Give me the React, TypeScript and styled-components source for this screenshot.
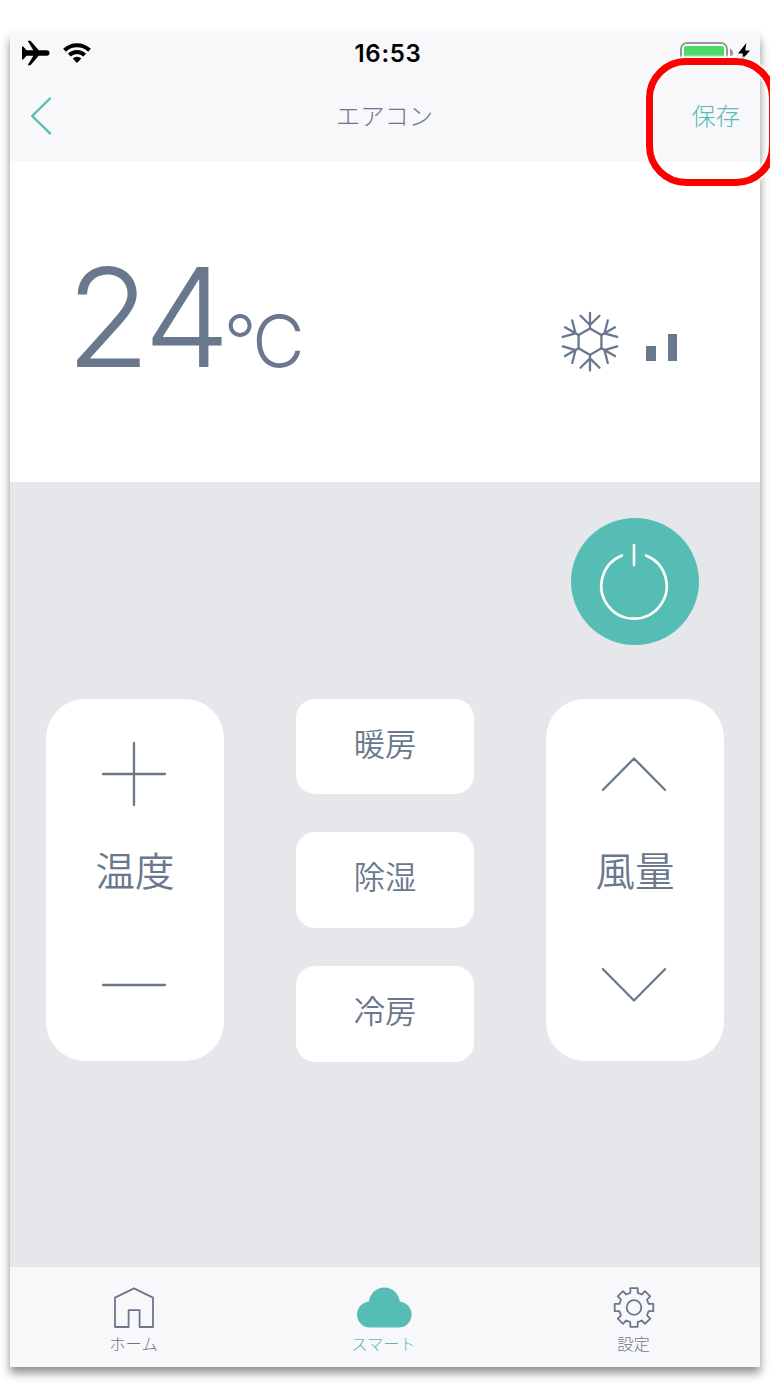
import React from "react";
import styled, { createGlobalStyle } from "styled-components";

const slate = "#69788c";
const teal = "#56bdb5";

const GlobalStyle = createGlobalStyle`
  html, body { margin: 0; padding: 0; background: #fff; }
  body { width: 770px; height: 1400px; overflow: hidden; }
  * { box-sizing: border-box; }
  svg { display: block; flex: none; }
  button { border: 0; padding: 0; margin: 0; background: none; font: inherit; color: inherit; }
`;

const Page = styled.div`
  position: relative;
  width: 770px;
  height: 1400px;
  padding: 33px 10px;
  overflow: hidden;
`;

const Phone = styled.div`
  display: flex;
  flex-direction: column;
  width: 750px;
  height: 1334px;
  color: ${slate};
  font-family: "Noto Sans CJK JP", sans-serif;
  font-weight: 300;
  box-shadow: 0 6px 9px rgba(0, 0, 0, 0.45);
`;

const Header = styled.header`
  height: 128px;
  background: #f8f8fa;
`;

const StatusBar = styled.div`
  display: grid;
  grid-template-columns: 1fr auto 1fr;
  align-items: center;
  height: 38px;
  padding: 0 10px 0 12px;
  color: #000;
`;

const StatusGroup = styled.div<{ $end?: boolean }>`
  display: flex;
  align-items: center;
  gap: ${(p) => (p.$end ? 4 : 13)}px;
  justify-content: ${(p) => (p.$end ? "flex-end" : "flex-start")};
`;

const Clock = styled.time`
  font: 600 24px/36px Inter, sans-serif;
  letter-spacing: 0.7px;
  padding: 3px 0 0 4px;
`;

const NavBar = styled.nav`
  display: grid;
  grid-template-columns: 1fr auto 1fr;
  align-items: center;
  height: 90px;
  padding: 0 20px;
  font-size: 24.3px;
  line-height: 36px;
`;

const BackButton = styled.button`
  justify-self: start;
`;

const Title = styled.span`
  padding: 0 1px 3px 0;
`;

const SaveButton = styled.button`
  justify-self: end;
  padding-bottom: 3px;
  color: ${teal};
`;

const Display = styled.section`
  display: flex;
  justify-content: space-between;
  height: 321px;
  padding: 0 83px 0 56px;
  background: #fff;
`;

const Temperature = styled.div`
  display: flex;
  align-items: baseline;
  padding-top: 73px;
  font-family: Inter, sans-serif;
  font-weight: 260;
  font-size: 137.5px;
  line-height: 166px;
  letter-spacing: -4.5px;
`;

const Unit = styled.span`
  margin-left: -2px;
  font-size: 72px;
  letter-spacing: -3.5px;
`;

const Indicators = styled.div`
  display: flex;
  gap: 26px;
  padding-top: 150px;
`;

const FanLevel = styled.div`
  display: flex;
  align-items: flex-end;
  gap: 12px;
  height: 50px;
`;

const FanBar = styled.span<{ $height: number }>`
  width: 9.5px;
  height: ${(p) => p.$height}px;
  background: ${slate};
`;

const Controls = styled.main`
  flex: 1;
  padding: 36px;
  background: #e5e7eb;
  font-weight: 350;
`;

const PowerRow = styled.div`
  display: flex;
  justify-content: flex-end;
  height: 181px;
  padding-right: 25px;
`;

const PowerButton = styled.button`
  width: 128px;
  height: 127px;
  border-radius: 50%;
  background: ${teal};
`;

const ControlGrid = styled.div`
  display: grid;
  grid-template-columns: repeat(3, 178px);
  justify-content: space-between;
  align-items: start;
`;

const Rocker = styled.div`
  display: flex;
  flex-direction: column;
  align-items: center;
  justify-content: space-between;
  height: 362px;
  padding: 43px 0 44px;
  border-radius: 39px;
  background: #fff;
`;

const RockerButton = styled.button`
  padding-right: 2px;
`;

const RockerLabel = styled.span`
  font-size: 39.5px;
  line-height: 58px;
  margin-top: -22px;
`;

const ModeList = styled.div`
  display: grid;
  grid-template-rows: 95px 96px 96px;
  row-gap: 38px;
`;

const ModeButton = styled.button`
  padding-bottom: 8px;
  border-radius: 19px;
  background: #fff;
  font-size: 31.3px;
  line-height: 46px;
`;

const TabBar = styled.footer`
  display: grid;
  grid-template-columns: repeat(3, 250px);
  height: 100px;
  background: #f8f8fa;
`;

const Tab = styled.div<{ $active?: boolean }>`
  display: flex;
  flex-direction: column;
  align-items: center;
  padding: 19px 2px 0 0;
  color: ${(p) => (p.$active ? teal : slate)};
  font-size: 16.3px;
  line-height: 24px;
`;

const TabLabel = styled.span`
  margin-top: 2px;
  padding-right: 1px;
`;

const Callout = styled.div`
  position: absolute;
  left: 646px;
  top: 58px;
  width: 130px;
  height: 128px;
  border: 7px solid #f00;
  border-radius: 40px;
  box-shadow: 0 0 2px 2px #fff, inset 0 0 2px 2px #fff;
`;

const Plane = () => (
  <svg width="28" height="26" viewBox="0 0 28 26" fill="#000">
    <path d="M0 6.6h1.2l3.3 3.6h6.8L5.7 0.7h2.8l8.2 9.5h8a2.8 2.8 0 0 1 0 5.6h-8l-8.2 9.5H5.7l5.6-9.5H4.5l-3.3 3.6H0z" />
  </svg>
);

const Wifi = () => (
  <svg width="28" height="20" viewBox="0 0 28 20" fill="none" stroke="#000" strokeWidth="4">
    <path d="M1.5 7.2a18 18 0 0 1 25 0" />
    <path d="M6.3 12.1a11.2 11.2 0 0 1 15.4 0" />
    <path d="M9.7 15.6a6.2 6.2 0 0 1 8.6 0L14 20z" fill="#000" stroke="none" />
  </svg>
);

const Battery = () => (
  <svg width="54" height="22" viewBox="0 0 54 22">
    <rect x="1" y="1" width="46" height="20" rx="6" fill="#fff" stroke="#98989b" strokeWidth="2" />
    <rect x="4" y="4" width="40" height="14" rx="2" fill="#4cd964" />
    <path d="M50 6.5q3 1.5 3 4.5t-3 4.5z" fill="#98989b" />
  </svg>
);

const Bolt = () => (
  <svg width="12" height="20" viewBox="0 0 12 20" fill="#000">
    <path d="M8.3 0 0 10.6h4.9L3.6 17.5 12 7.4H7.2z" />
  </svg>
);

const Snowflake = () => (
  <svg width="60" height="62" viewBox="-30 -30.7 60 62" fill="none" stroke={slate} strokeWidth="2.3" strokeLinecap="round">
    {[0, 60, 120, 180, 240, 300].map((angle) => (
      <g key={angle} transform={`rotate(${angle})`}>
        <path d="M0-13.2V-28.8M-9.5-26 0-16.7 9.5-26M0-13.2 11.4-6.6" />
      </g>
    ))}
  </svg>
);

const PowerIcon = () => (
  <svg width="128" height="127" viewBox="0 0 128 127" fill="none" stroke="#fff" strokeWidth="2.6" strokeLinecap="round">
    <path d="M63 27v20M51 37.5a32.7 32.7 0 1 0 24 0" />
  </svg>
);

const shapes = {
  plus: "M32 1v62M1 32h62",
  minus: "M1 32h62",
  up: "M.8 48 32 16.5 63.2 48",
  down: "M.8 16 32 47.5 63.2 16",
};

const RockerIcon = ({ shape }: { shape: keyof typeof shapes }) => (
  <svg width="64" height="64" viewBox="0 0 64 64" fill="none" stroke={slate} strokeWidth="2.3" strokeLinecap="round" strokeLinejoin="round">
    <path d={shapes[shape]} />
  </svg>
);

const HomeIcon = () => (
  <svg width="42" height="43" viewBox="0 0 42 43" fill="none" stroke={slate} strokeWidth="1.8" strokeLinejoin="round">
    <path d="M2 41V11.6L21 2.4l19 9.2V41H26.6V24.2H15.6V41z" />
  </svg>
);

const CloudIcon = () => (
  <svg width="56" height="43" viewBox="0 0 56 43" fill={teal}>
    <rect x="1" y="15.4" width="54.6" height="26.2" rx="13.1" />
    <circle cx="28.3" cy="16.8" r="15.4" />
  </svg>
);

const gearOutline = Array.from({ length: 8 }, (_, i) => {
  const a = (i * Math.PI) / 4;
  return [[-3.7, -14.7], [-3.7, -19.3], [3.7, -19.3], [3.7, -14.7]]
    .map(([x, y]) => `${x * Math.cos(a) - y * Math.sin(a)},${x * Math.sin(a) + y * Math.cos(a)}`)
    .join(" ");
}).join(" ");

const GearIcon = () => (
  <svg width="42" height="43" viewBox="-21 -21.5 42 43" fill="none" stroke={slate} strokeWidth="1.8" strokeLinejoin="round">
    <polygon points={gearOutline} />
    <circle r="7.3" />
  </svg>
);

export default function App() {
  return (
    <Page>
      <GlobalStyle />
      <Phone>
        <Header>
          <StatusBar>
            <StatusGroup>
              <Plane />
              <Wifi />
            </StatusGroup>
            <Clock>16:53</Clock>
            <StatusGroup $end>
              <Battery />
              <Bolt />
            </StatusGroup>
          </StatusBar>
          <NavBar>
            <BackButton aria-label="戻る">
              <svg width="22" height="38" viewBox="0 0 22 38" fill="none" stroke={teal} strokeWidth="2.4" strokeLinecap="round" strokeLinejoin="round">
                <path d="M20 1.5 2.2 19 20 36.3" />
              </svg>
            </BackButton>
            <Title>エアコン</Title>
            <SaveButton>保存</SaveButton>
          </NavBar>
        </Header>
        <Display>
          <Temperature>
            24<Unit>°C</Unit>
          </Temperature>
          <Indicators>
            <Snowflake />
            <FanLevel>
              <FanBar $height={15} />
              <FanBar $height={27.5} />
            </FanLevel>
          </Indicators>
        </Display>
        <Controls>
          <PowerRow>
            <PowerButton aria-label="電源">
              <PowerIcon />
            </PowerButton>
          </PowerRow>
          <ControlGrid>
            <Rocker>
              <RockerButton><RockerIcon shape="plus" /></RockerButton>
              <RockerLabel>温度</RockerLabel>
              <RockerButton><RockerIcon shape="minus" /></RockerButton>
            </Rocker>
            <ModeList>
              <ModeButton>暖房</ModeButton>
              <ModeButton>除湿</ModeButton>
              <ModeButton>冷房</ModeButton>
            </ModeList>
            <Rocker>
              <RockerButton><RockerIcon shape="up" /></RockerButton>
              <RockerLabel>風量</RockerLabel>
              <RockerButton><RockerIcon shape="down" /></RockerButton>
            </Rocker>
          </ControlGrid>
        </Controls>
        <TabBar>
          <Tab>
            <HomeIcon />
            <TabLabel>ホーム</TabLabel>
          </Tab>
          <Tab $active>
            <CloudIcon />
            <TabLabel>スマート</TabLabel>
          </Tab>
          <Tab>
            <GearIcon />
            <TabLabel>設定</TabLabel>
          </Tab>
        </TabBar>
      </Phone>
      <Callout />
    </Page>
  );
}
